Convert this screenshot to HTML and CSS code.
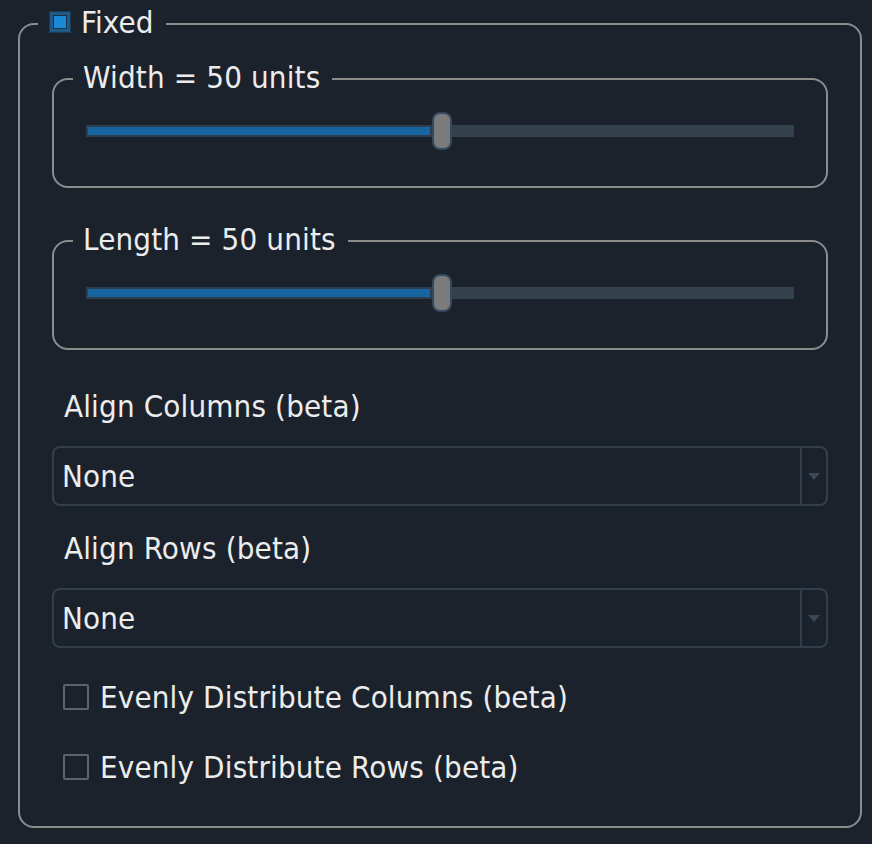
FILE: index.html
```html
<!DOCTYPE html>
<html>
<head>
<meta charset="utf-8">
<link rel="stylesheet" href="styles.css">
</head>
<body>
<fieldset class="outer">
  <legend class="outer-legend">
    <span class="check-on"><span class="check-on-fill"></span></span>
    <span>Fixed</span>
  </legend>
  <div class="body">
    <fieldset class="group group-first">
      <legend class="group-legend">Width = 50 units</legend>
      <div class="slider">
        <div class="fill"></div>
        <div class="thumb"></div>
        <div class="rest"></div>
      </div>
    </fieldset>
    <fieldset class="group">
      <legend class="group-legend">Length = 50 units</legend>
      <div class="slider">
        <div class="fill"></div>
        <div class="thumb"></div>
        <div class="rest"></div>
      </div>
    </fieldset>

    <div class="label label-first">Align Columns (beta)</div>
    <div class="select">
      <div class="select-value">None</div>
      <div class="select-arrow"><span class="tri"></span></div>
    </div>

    <div class="label">Align Rows (beta)</div>
    <div class="select">
      <div class="select-value">None</div>
      <div class="select-arrow"><span class="tri"></span></div>
    </div>

    <div class="check-row check-row-first">
      <span class="check-off"></span>
      <span>Evenly Distribute Columns (beta)</span>
    </div>
    <div class="check-row">
      <span class="check-off"></span>
      <span>Evenly Distribute Rows (beta)</span>
    </div>
  </div>
</fieldset>
</body>
</html>
```

FILE: styles.css
```css
html, body {
  margin: 0;
  padding: 0;
  background: #1b222c;
}
body {
  font-family: "DejaVu Sans Condensed", "DejaVu Sans", sans-serif;
  font-stretch: condensed;
  font-size: 31px;
  letter-spacing: 0.15px;
  color: #ececec;
  width: 872px;
  height: 844px;
  overflow: hidden;
}
.outer {
  margin: 4px 10px 0 18px;
  padding: 0 18px 0 18px;
  border: 2px solid #8c8c8c;
  border-radius: 16px;
  height: 824px;
  box-sizing: border-box;
}
.outer-legend {
  display: flex;
  align-items: center;
  gap: 10px;
  padding: 0 12px 4px 11px;
  line-height: 36px;
}
.check-on {
  width: 22px;
  height: 22px;
  box-sizing: border-box;
  border: 1px solid #1b3c58;
  background: #1f5a86;
  padding: 3px;
  display: flex;
}
.check-on-fill {
  flex: 1;
  background: #1b8ad6;
  border: 1px solid #19324a;
}
.body {
  margin: 0 14px;
  display: flex;
  flex-direction: column;
}
.group {
  margin: 33px 0 0 0;
  padding: 13px 19px 36px 19px;
  border: 2px solid #8c8c8c;
  border-radius: 16px;
  min-inline-size: 0;
}
.group-first {
  margin-top: 15px;
}
.group-legend {
  padding: 0 12px 4px 10px;
  line-height: 36px;
  white-space: nowrap;
}
.slider {
  margin: 0 13px;
  height: 38px;
  display: flex;
  align-items: center;
}
.fill {
  flex: 1 1 0;
  height: 12px;
  box-sizing: border-box;
  background: #1864a0;
  border: 2px solid #2c3e50;
}
.rest {
  flex: 1 1 0;
  height: 12px;
  background: #33414d;
}
.thumb {
  width: 20px;
  height: 38px;
  box-sizing: border-box;
  background: #7b7b7b;
  border: 2px solid #34495b;
  border-radius: 8px;
}
.label {
  margin: 24px 0 0 12px;
  line-height: 36px;
}
.label-first {
  margin-top: 38px;
}
.select {
  margin-top: 22px;
  height: 60px;
  box-sizing: border-box;
  border: 2px solid #323e4a;
  border-radius: 8px;
  display: flex;
}
.select-value {
  flex: 1;
  padding-left: 8px;
  display: flex;
  align-items: center;
}
.select-arrow {
  width: 24px;
  border-left: 2px solid #323e4a;
  display: flex;
  align-items: center;
  justify-content: center;
}
.tri {
  width: 0;
  height: 0;
  border-left: 6px solid transparent;
  border-right: 6px solid transparent;
  border-top: 7px solid #3c4854;
}
.check-row {
  display: flex;
  align-items: center;
  gap: 11px;
  margin: 34px 0 0 11px;
  line-height: 36px;
}
.check-row-first {
  margin-top: 31px;
}
.check-off {
  width: 26px;
  height: 26px;
  box-sizing: border-box;
  border: 2px solid #606468;
  border-radius: 2px;
}
```
